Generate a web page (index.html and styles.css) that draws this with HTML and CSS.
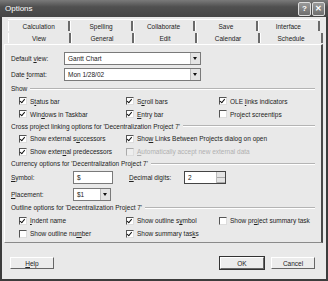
FILE: index.html
```html
<!DOCTYPE html>
<html lang="en">
<head>
  <meta charset="UTF-8">
  <title>Options</title>
  <link rel="stylesheet" href="styles.css">
</head>
<body>
  <div class="window">
    <div class="titlebar">
      <span class="title">Options</span>
      <span class="tbtns">
        <span class="tbtn">?</span>
        <span class="tbtn">&#x2715;</span>
      </span>
    </div>

    <div class="tabs">
      <div class="tabrow back">
        <span class="tab">Calculation</span>
        <span class="tab">Spelling</span>
        <span class="tab">Collaborate</span>
        <span class="tab">Save</span>
        <span class="tab">Interface</span>
      </div>
      <div class="tabrow front">
        <span class="tab active">View</span>
        <span class="tab">General</span>
        <span class="tab">Edit</span>
        <span class="tab">Calendar</span>
        <span class="tab">Schedule</span>
      </div>
    </div>

    <div class="panel">
      <div class="field">
        <span class="flabel">Default <u>v</u>iew:</span>
        <span class="combo wide"><span class="cval">Gantt Chart</span><span class="arrow"></span></span>
      </div>
      <div class="field">
        <span class="flabel">Date <u>f</u>ormat:</span>
        <span class="combo wide"><span class="cval">Mon 1/28/02</span><span class="arrow"></span></span>
      </div>

      <div class="group"><span>Show</span></div>
      <div class="checks">
        <label class="chk"><span class="box on"></span><span>S<u>t</u>atus bar</span></label>
        <label class="chk"><span class="box on"></span><span>S<u>c</u>roll bars</span></label>
        <label class="chk"><span class="box on"></span><span>OLE <u>l</u>inks indicators</span></label>
        <label class="chk"><span class="box on"></span><span>Win<u>d</u>ows in Taskbar</span></label>
        <label class="chk"><span class="box on"></span><span><u>E</u>ntry bar</span></label>
        <label class="chk"><span class="box"></span><span>Project screentips</span></label>
      </div>

      <div class="group"><span>Cross project linking options for 'Decentralization Project 7'</span></div>
      <div class="checks two">
        <label class="chk"><span class="box on"></span><span>Show external s<u>u</u>ccessors</span></label>
        <label class="chk"><span class="box on"></span><span>Sho<u>w</u> Links Between Projects dialog on open</span></label>
        <label class="chk"><span class="box on"></span><span>Show exter<u>n</u>al predecessors</span></label>
        <label class="chk off"><span class="box"></span><span><u>A</u>utomatically accept new external data</span></label>
      </div>

      <div class="group"><span>Currency options for 'Decentralization Project 7'</span></div>
      <div class="field cur">
        <span class="flabel short"><u>S</u>ymbol:</span>
        <span class="edit sym">$</span>
        <span class="flabel dec"><u>D</u>ecimal digits:</span>
        <span class="edit spin"><span class="cval">2</span><span class="spinner"><i></i><i></i></span></span>
      </div>
      <div class="field cur">
        <span class="flabel short"><u>P</u>lacement:</span>
        <span class="combo place"><span class="cval">$1</span><span class="arrow"></span></span>
      </div>

      <div class="group"><span>Outline options for 'Decentralization Project 7'</span></div>
      <div class="checks">
        <label class="chk"><span class="box on"></span><span><u>I</u>ndent name</span></label>
        <label class="chk"><span class="box on"></span><span>Show outline s<u>y</u>mbol</span></label>
        <label class="chk"><span class="box"></span><span>Show pr<u>o</u>ject summary task</span></label>
        <label class="chk"><span class="box"></span><span>Show outline nu<u>m</u>ber</span></label>
        <label class="chk"><span class="box on"></span><span>Show summary tas<u>k</u>s</span></label>
      </div>
    </div>

    <div class="footer">
      <span class="btn"><u>H</u>elp</span>
      <span class="spacer"></span>
      <span class="btn default">OK</span>
      <span class="btn">Cancel</span>
    </div>
  </div>
</body>
</html>
```

FILE: styles.css
```css
body {
  margin: 0;
  background: #ffffff;
  font-family: "Liberation Sans", Arial, sans-serif;
  font-size: 6.5px;
  color: #222;
}
u {
  text-decoration: underline;
}
.window {
  width: 328px;
  height: 281px;
  box-sizing: border-box;
  background: #e9e9e9;
  border: 2px solid #3c3c3c;
  border-top: none;
  display: flex;
  flex-direction: column;
}
.titlebar {
  height: 17px;
  margin: 0 -2px;
  background: linear-gradient(#7a7a7a, #505050 40%, #454545);
  display: flex;
  align-items: center;
  padding: 0 3px 0 5px;
}
.title {
  color: #fff;
  font-size: 8px;
  flex: 1;
}
.tbtns {
  display: flex;
  gap: 1px;
}
.tbtn {
  width: 11px;
  height: 12px;
  border: 1px solid #ddd;
  border-radius: 2px;
  background: linear-gradient(#9a9a9a, #6e6e6e);
  color: #fff;
  font-size: 8px;
  font-weight: bold;
  display: flex;
  align-items: center;
  justify-content: center;
}

/* tabs */
.tabs {
  margin: 2px 3px 0 4px;
}
.tabrow {
  display: flex;
  height: 12px;
  padding-left: 2px;
}
.tabrow.back {
  border-top: 1px solid #fff;
  margin-left: 2px;
  margin-right: 3px;
  padding-left: 0;
}
.tab {
  flex: 1;
  display: flex;
  align-items: center;
  justify-content: center;
  border-right: 2px solid #6a6a6a;
  border-left: 1px solid #fff;
  margin: 1px 0;
}
.tab.active {
  background: #e9e9e9;
}

/* panel */
.panel {
  height: 199px;
  box-sizing: border-box;
  margin: 0 3px 0 2px;
  border-top: 1px solid #fff;
  border-left: 1px solid #fff;
  border-right: 2px solid #4a4a4a;
  border-bottom: 1px solid #8a8a8a;
  padding: 7px 0 0 6px;
  display: flex;
  flex-direction: column;
}
.field {
  display: flex;
  align-items: center;
  height: 13px;
  margin-bottom: 3px;
}
.flabel {
  width: 53px;
}
.flabel.short {
  width: 62px;
}
.flabel.dec {
  width: 55px;
  margin-left: 16px;
}
.combo, .edit {
  height: 13px;
  box-sizing: border-box;
  background: #fff;
  border: 1px solid #7a7a7a;
  display: flex;
  align-items: center;
  padding-left: 3px;
}
.combo.wide {
  width: 137px;
}
.combo.place {
  width: 38px;
}
.cval {
  flex: 1;
}
.arrow {
  width: 9px;
  height: 11px;
  background: #e4e4e4;
  border-left: 1px solid #bbb;
  position: relative;
}
.arrow::after {
  content: "";
  position: absolute;
  left: 2px;
  top: 4px;
  border: 2.5px solid transparent;
  border-top: 3px solid #111;
}
.edit.sym {
  width: 40px;
}
.edit.spin {
  width: 42px;
  border-color: #444;
}
.spinner {
  width: 8px;
  height: 11px;
  display: flex;
  flex-direction: column;
  background: #e4e4e4;
  border-left: 1px solid #bbb;
}
.spinner i {
  flex: 1;
  border-bottom: 1px solid #aaa;
}
.group {
  display: flex;
  align-items: center;
  height: 11px;
  margin-top: -1px;
  padding-right: 6px;
}
.checks + .group {
  margin-top: 0;
}
.group::after {
  content: "";
  flex: 1;
  height: 0;
  margin-left: 3px;
  border-top: 1px solid #b4b4b4;
  border-bottom: 1px solid #fff;
}
.group + .checks {
  margin-top: 0.5px;
}
.group + .cur {
  margin-top: 2px;
  margin-bottom: 4px;
}
.cur + .cur {
  margin-bottom: 2px;
}
.cur + .group + .checks {
  margin-top: 1px;
}
.checks {
  display: grid;
  grid-template-columns: 107px 93px 1fr;
  grid-auto-rows: 13px;
  padding-left: 8px;
}
.checks.two {
  grid-template-columns: 107px 1fr;
}
.chk {
  display: flex;
  align-items: center;
  white-space: nowrap;
}
.box {
  width: 6px;
  height: 6px;
  background: #fff;
  border-top: 1px solid #555;
  border-left: 1px solid #555;
  border-right: 1px solid #ddd;
  border-bottom: 1px solid #ddd;
  margin-right: 3px;
  position: relative;
}
.box.on::after {
  content: "";
  position: absolute;
  left: 1px;
  top: 0;
  width: 2px;
  height: 3.5px;
  border-right: 1.5px solid #111;
  border-bottom: 1.5px solid #111;
  transform: rotate(40deg);
}
.chk.off {
  color: #b0b0b0;
}
.chk.off .box {
  background: #eee;
  border-top-color: #aaa;
  border-left-color: #aaa;
}

/* buttons */
.footer {
  display: flex;
  align-items: center;
  gap: 7px;
  padding: 14px 11px 0 8px;
}
.spacer {
  flex: 1;
}
.btn {
  width: 44px;
  height: 12px;
  box-sizing: border-box;
  display: flex;
  align-items: center;
  justify-content: center;
  background: #ececec;
  border-top: 1px solid #fff;
  border-left: 1px solid #fff;
  border-right: 1px solid #666;
  border-bottom: 1px solid #666;
}
.btn.default {
  outline: 1px solid #333;
}
```
